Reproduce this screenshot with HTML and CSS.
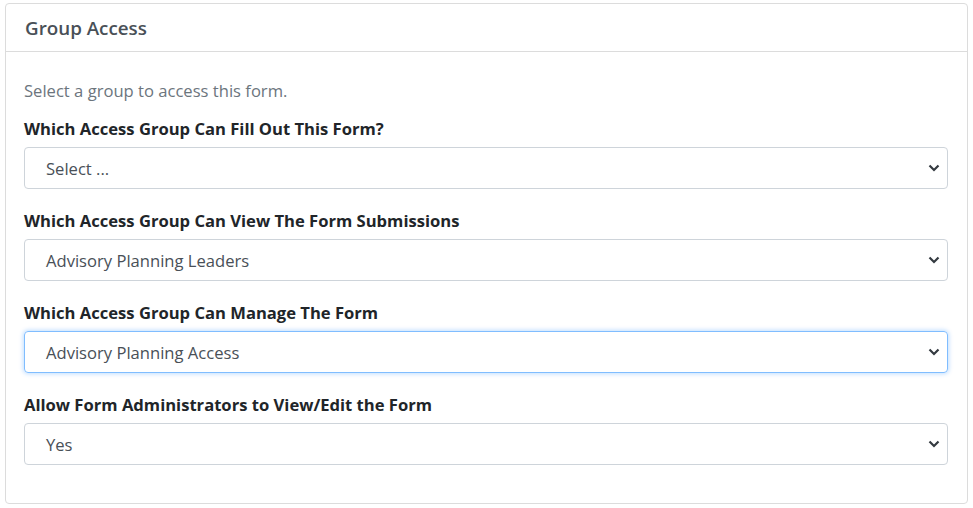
FILE: index.html
```html
<!DOCTYPE html>
<html>
<head>
<meta charset="utf-8">
<link rel="stylesheet" href="styles.css">
</head>
<body>
<div class="card">
  <div class="card-header">Group Access</div>
  <div class="card-body">
    <p class="intro">Select a group to access this form.</p>
    <div class="form-group">
      <label class="label">Which Access Group Can Fill Out This Form?</label>
      <div class="select"><span>Select ...</span><svg class="chev" viewBox="0 0 12 8" width="12" height="8"><path d="M1.5 1.5 L6 6 L10.5 1.5" fill="none" stroke="#343a40" stroke-width="2.2"/></svg></div>
    </div>
    <div class="form-group">
      <label class="label">Which Access Group Can View The Form Submissions</label>
      <div class="select"><span>Advisory Planning Leaders</span><svg class="chev" viewBox="0 0 12 8" width="12" height="8"><path d="M1.5 1.5 L6 6 L10.5 1.5" fill="none" stroke="#343a40" stroke-width="2.2"/></svg></div>
    </div>
    <div class="form-group">
      <label class="label">Which Access Group Can Manage The Form</label>
      <div class="select focus"><span>Advisory Planning Access</span><svg class="chev" viewBox="0 0 12 8" width="12" height="8"><path d="M1.5 1.5 L6 6 L10.5 1.5" fill="none" stroke="#343a40" stroke-width="2.2"/></svg></div>
    </div>
    <div class="form-group">
      <label class="label">Allow Form Administrators to View/Edit the Form</label>
      <div class="select"><span>Yes</span><svg class="chev" viewBox="0 0 12 8" width="12" height="8"><path d="M1.5 1.5 L6 6 L10.5 1.5" fill="none" stroke="#343a40" stroke-width="2.2"/></svg></div>
    </div>
  </div>
</div>
</body>
</html>
```
FILE: styles.css
```css
* { box-sizing: border-box; }
html, body { margin: 0; background: #fff; }
body {
  padding: 3px 5px 0;
  font-family: "Open Sans", "Noto Sans", sans-serif;
  font-size: 16.6px;
  color: #212529;
}
.card {
  border: 1px solid #dcdcdc;
  border-radius: 4px;
  height: 501px;
}
.card-header {
  height: 48px;
  border-bottom: 1px solid #dcdcdc;
  padding: 0 19px;
  display: flex;
  align-items: center;
  font-size: 18.8px;
  font-weight: 600;
  color: #495057;
}
.card-body {
  padding: 27px 19px 18px 18px;
}
.intro {
  margin: 0 0 14px;
  line-height: 24px;
  color: #6c757d;
}
.form-group { margin-bottom: 20px; }
.label {
  display: block;
  font-weight: 700;
  line-height: 24px;
  margin-bottom: 6px;
  color: #212529;
}
.select {
  height: 42px;
  border: 1px solid #ced4da;
  border-radius: 4px;
  padding: 0 7px 0 21px;
  display: flex;
  align-items: center;
  justify-content: space-between;
  color: #495057;
}
.select.focus {
  border-color: #80bdff;
  box-shadow: 0 0 4px 1px rgba(0, 123, 255, 0.25);
}
.chev { display: block; }
```
